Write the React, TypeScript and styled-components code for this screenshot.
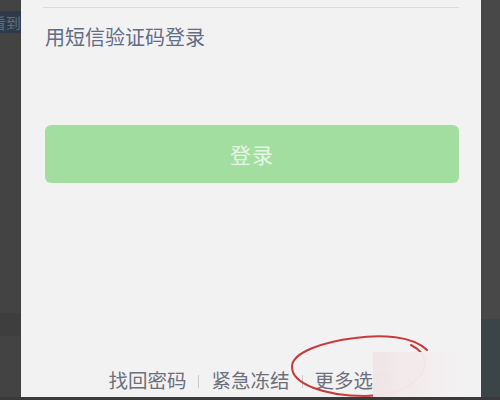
import React from 'react';
import styled, { createGlobalStyle } from 'styled-components';

const GlobalStyle = createGlobalStyle`
	html, body {
		margin: 0;
		padding: 0;
		background: #3a3a3a;
	}
	body {
		font-family: "Noto Sans CJK SC", "Noto Sans", sans-serif;
	}
`;

const StyledScreen = styled.div`
	display: flex;
	width: 500px;
	height: 400px;
	overflow: hidden;
	background: #3a3a3a;
`;

const StyledLeftStrip = styled.div`
	width: 21px;
	height: 397px;
	display: flex;
	flex-direction: column;
	background: #434343;
`;

const StyledHiddenTag = styled.div`
	margin-top: 11px;
	height: 22px;
	display: flex;
	justify-content: flex-end;
	align-items: center;
	overflow: hidden;
	background: #2f3a48;
	color: #5d6e84;
	font-size: 15px;
	white-space: nowrap;
`;

const StyledShadeBand = styled.div`
	margin-top: 280px;
	height: 23px;
	background: #3e3e3e;
`;

const StyledPanel = styled.div`
	position: relative;
	width: 460px;
	height: 397px;
	display: flex;
	flex-direction: column;
	padding: 0 22px 0 24px;
	box-sizing: border-box;
	background: #f2f2f3;
	overflow: hidden;
`;

const StyledDivider = styled.div`
	margin-top: 7px;
	margin-left: -2px;
	height: 1px;
	background: #dcdcdc;
`;

const StyledSmsLink = styled.div`
	margin-top: 15px;
	font-size: 20px;
	line-height: 28px;
	color: #616c86;
`;

const StyledLoginButton = styled.button`
	margin-top: 74px;
	height: 58px;
	width: 100%;
	border: none;
	border-radius: 6px;
	background: #a3dea1;
	color: #e6f6e4;
	font-family: inherit;
	font-size: 21px;
	letter-spacing: 1px;
`;

const StyledFooter = styled.div`
	margin-top: auto;
	margin-left: -3px;
	padding-bottom: 4px;
	display: flex;
	justify-content: center;
	align-items: center;
	font-size: 19.5px;
	line-height: 26px;
	color: #6c707b;
`;

const StyledPipe = styled.span`
	width: 1px;
	height: 13px;
	margin: 2px 12px 0;
	background: #cacacc;
`;

const StyledCircleMark = styled.svg`
	position: absolute;
	left: 264px;
	top: 330px;
`;

const StyledWatermark = styled.div`
	position: absolute;
	left: 352px;
	top: 352px;
	width: 92px;
	height: 46px;
	background: linear-gradient(
		90deg,
		rgba(240, 229, 231, 0.99) 0%,
		rgba(243, 237, 238, 0.97) 60%,
		rgba(242, 242, 243, 0.6) 100%
	);
`;

const StyledRightStrip = styled.div`
	width: 19px;
	height: 397px;
	display: flex;
	flex-direction: column;
	background: #3b4447;
`;

const StyledRightTop = styled.div`
	height: 319px;
	background: #484848;
`;

const footerLinks = ['找回密码', '紧急冻结', '更多选项'];

const App: React.FC = () => {
	return (
		<>
			<GlobalStyle />
			<StyledScreen>
				<StyledLeftStrip>
					<StyledHiddenTag>看到</StyledHiddenTag>
					<StyledShadeBand />
				</StyledLeftStrip>
				<StyledPanel>
					<StyledDivider />
					<StyledSmsLink>用短信验证码登录</StyledSmsLink>
					<StyledLoginButton>登录</StyledLoginButton>
					<StyledFooter>
						{footerLinks.map((link, i) => (
							<React.Fragment key={link}>
								{i > 0 && <StyledPipe />}
								<span>{link}</span>
							</React.Fragment>
						))}
					</StyledFooter>
					{/* 손으로 그린 빨간 동그라미 */}
					<StyledCircleMark width="150" height="70" viewBox="0 0 150 70">
						<path
							d="M142 20 C 128 6, 96 4, 70 8 C 38 12, 8 22, 7 36 C 6 54, 40 66, 80 66 C 112 66, 138 52, 140 34 C 141 26, 134 19, 126 15"
							fill="none"
							stroke="#c93a3c"
							strokeWidth="2"
							strokeLinecap="round"
						/>
					</StyledCircleMark>
					<StyledWatermark />
				</StyledPanel>
				<StyledRightStrip>
					<StyledRightTop />
				</StyledRightStrip>
			</StyledScreen>
		</>
	);
};

export default App;
